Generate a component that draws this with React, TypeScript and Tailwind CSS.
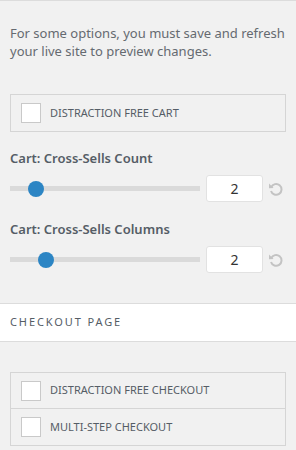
import { useState } from 'react';

const font = { fontFamily: '"Noto Sans", "Open Sans", sans-serif' };

function ResetIcon() {
  return (
    <svg width="16" height="16" viewBox="0 0 16 16" fill="none" className="text-[#c3c3c3]">
      <path
        d="M3.2 6.2A5.4 5.4 0 1 1 3 10"
        stroke="currentColor"
        strokeWidth="2"
        strokeLinecap="butt"
      />
      <path d="M1 2.6 L5.6 7 L1 7.2 Z" fill="currentColor" />
    </svg>
  );
}

function CheckRow({ label, last }: { label: string; last?: boolean }) {
  const [checked, setChecked] = useState(false);
  return (
    <label
      className={`flex items-center h-[36px] pl-[10px] gap-[9px] cursor-pointer ${
        last ? '' : 'border-b border-[#d5d5d5]'
      }`}
    >
      <span
        onClick={() => setChecked(!checked)}
        className="w-[20px] h-[20px] bg-white border border-[#c9c9c9] flex items-center justify-center text-[#2c85c4] text-xs"
      >
        {checked ? '✓' : ''}
      </span>
      <span className="text-[11px] text-[#555d66] uppercase">{label}</span>
    </label>
  );
}

function SliderRow({ title, value, pos }: { title: string; value: number; pos: number }) {
  return (
    <div>
      <div className="text-[13px] leading-[20px] font-semibold text-[#555d66]">{title}</div>
      <div className="flex items-center mt-[7px]">
        <div className="relative w-[190px] h-[5px] bg-[#dadada]">
          <div
            className="absolute top-1/2 w-[16px] h-[16px] -mt-[8px] -ml-[8px] rounded-full bg-[#2c85c4]"
            style={{ left: pos }}
          />
        </div>
        <div className="ml-[6px] w-[57px] h-[27px] bg-white border border-[#e2e2e2] rounded-[3px] flex items-center justify-center text-[14px] text-[#333]">
          {value}
        </div>
        <div className="ml-[5px]">
          <ResetIcon />
        </div>
      </div>
    </div>
  );
}

export default function App() {
  return (
    <div style={font} className="w-full h-[450px] overflow-hidden bg-[#f1f1f1] border-t border-[#dcdcdc]">
      <div className="px-[10px]">
        <p className="pt-[23px] text-[13px] leading-[18px] text-[#656a70]">
          For some options, you must save and refresh your live site to preview changes.
        </p>
        <div className="mt-[34px] border border-[#d5d5d5]">
          <CheckRow label="Distraction Free Cart" last />
        </div>
        <div className="mt-[16px]">
          <SliderRow title="Cart: Cross-Sells Count" value={2} pos={26} />
        </div>
        <div className="mt-[17px]">
          <SliderRow title="Cart: Cross-Sells Columns" value={2} pos={36} />
        </div>
      </div>
      <div className="mt-[30px] h-[39px] bg-white border-y border-[#dcdcdc] flex items-center px-[10px]">
        <span className="text-[11px] tracking-[1.9px] text-[#555d66]">CHECKOUT PAGE</span>
      </div>
      <div className="px-[10px] mt-[30px]">
        <div className="border border-[#d5d5d5]">
          <CheckRow label="Distraction Free Checkout" />
          <CheckRow label="Multi-Step Checkout" last />
        </div>
      </div>
    </div>
  );
}
